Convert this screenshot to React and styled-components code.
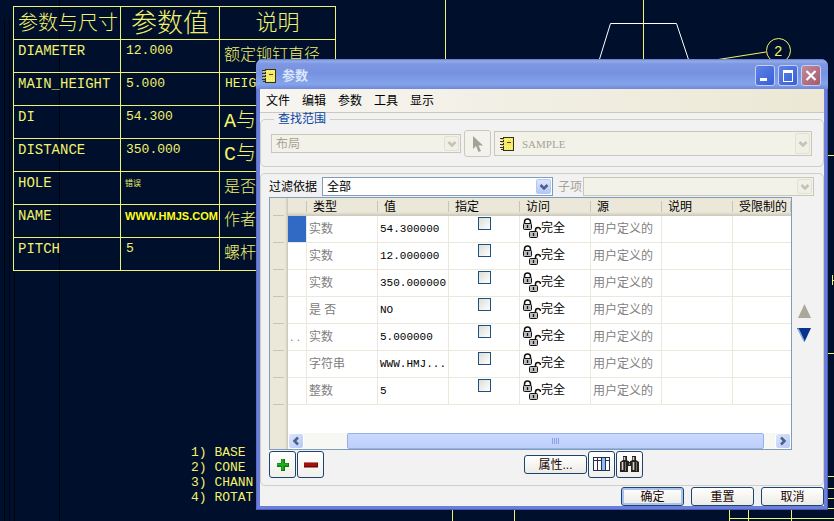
import { useState } from "react";
import styled, { createGlobalStyle, css } from "styled-components";

const GlobalStyle = createGlobalStyle`
  * {
    box-sizing: border-box;
  }

  body {
    margin: 0;
    background: #000f2b;
    font-family: "Liberation Sans", "Noto Sans CJK SC", sans-serif;
    font-size: 12px;
    line-height: 16px;
  }

  button, select, input {
    font: inherit;
    margin: 0;
  }
`;

const drawingRows = [
  { name: "DIAMETER", value: "12.000", note: "额定铆钉直径" },
  { name: "MAIN_HEIGHT", value: "5.000", note: "HEIG", latin: true },
  { name: "DI", value: "54.300", note: "A与", large: true },
  { name: "DISTANCE", value: "350.000", note: "C与", large: true },
  { name: "HOLE", value: "错误", kind: "tiny", note: "是否" },
  { name: "NAME", value: "WWW.HMJS.COM", kind: "bold", note: "作者" },
  { name: "PITCH", value: "5", note: "螺杆" },
];

const notes = ["1) BASE", "2) CONE", "3) CHANN", "4) ROTAT"];

const menus = ["文件", "编辑", "参数", "工具", "显示"];

const columns = ["类型", "值", "指定", "访问", "源", "说明", "受限制的"];

const params = [
  { type: "实数", value: "54.300000", selected: true },
  { type: "实数", value: "12.000000" },
  { type: "实数", value: "350.000000" },
  { type: "是 否", value: "NO" },
  { type: "实数", value: "5.000000", clipped: ". ." },
  { type: "字符串", value: "WWW.HMJ..." },
  { type: "整数", value: "5" },
];

const NotebookIcon = () => (
  <svg width="15" height="16" viewBox="0 0 15 16" shapeRendering="crispEdges">
    <rect x="3.500" y="1.500" width="10" height="13" fill="#f5ea62" stroke="#33311a" />
    <path d="M13.500 2v13M4 14.500h10" stroke="#33311a" />
    <path d="M5 3.500h8M5 10.500h8M5 12.500h8" stroke="#fff9a8" strokeDasharray="1 1" />
    <path d="M7 6.500h4" stroke="#4a4630" />
    <path d="M0 2.500h4M0 5.500h4M0 8.500h4M0 11.500h4M1 13.500h3" stroke="#33311a" />
    <path d="M1 3.500h3M1 6.500h3M1 9.500h3" stroke="#d9cf6a" />
  </svg>
);

const LocksIcon = () => (
  <svg width="19" height="21" viewBox="0 0 19 21" fill="none">
    <path d="M2.500 6V4q0-3 3-3t3 3v2" stroke="#111" strokeWidth="1.500" />
    <rect x="1.500" y="5.500" width="8" height="6" rx="1" fill="#bdbdbd" stroke="#111" />
    <path d="M5.500 7v3" stroke="#111" strokeWidth="1.300" />
    <path d="M13.500 14v-2q0-2.500 2.500-2.500t2.500 2.500" stroke="#111" strokeWidth="1.500" />
    <rect x="7.500" y="13.500" width="8" height="6" rx="1" fill="#bdbdbd" stroke="#111" />
    <path d="M11.500 15v3" stroke="#111" strokeWidth="1.300" />
  </svg>
);

const Chevron = ({ dir = "down", color = "#4d6185" }) => (
  <svg width="10" height="10" viewBox="0 0 10 10" fill="none" stroke={color} strokeWidth="2.500">
    {dir === "down" && <path d="M1.500 3 5 6.500 8.500 3" />}
    {dir === "left" && <path d="M7 1.500 3.500 5 7 8.500" />}
    {dir === "right" && <path d="M3 1.500 6.500 5 3 8.500" />}
  </svg>
);

const Drawing = () => (
  <Sketch aria-hidden="true">
    <g stroke="#000" strokeOpacity="0.7">
      <path d="M4.500 20V521M9.500 20V521M14.500 272V521M59.500 0V521" />
    </g>
    <g stroke="#f2f26b" fill="none" shapeRendering="crispEdges">
      <path d="M445.500 0V80M643.500 0V80M452.500 500V521M514.500 500V521" />
      <path d="M820 155.500H834M820 353.500H834M820 476.500H834M820 488.500H834M820 498.500H834M820 508.500H834" />
      <path d="M729.500 500V521M748.500 500V521M791.500 500V521M729 518.500H834M832.500 275V285M832 280.500H834" />
    </g>
    <path d="M598 64 610.500 23.500H676.500L690 64" stroke="#fff" fill="none" />
    <path d="M715 60 766 52" stroke="#f2f26b" />
    <circle cx="778.500" cy="50.500" r="12" stroke="#f2f26b" fill="none" />
    <text x="774" y="56" fill="#f2f26b" fontFamily="Liberation Mono" fontSize="14">2</text>
  </Sketch>
);

const Combo = ({ label, value, disabled, icon, serif, tall, id }) => (
  <ComboFrame $disabled={disabled} $tall={tall}>
    <ComboSelect id={id} aria-label={label} disabled={disabled} $icon={!!icon} $serif={serif}>
      <option>{value}</option>
    </ComboSelect>
    {icon && <ComboIcon>{icon}</ComboIcon>}
    <ComboArrow $disabled={disabled}>
      <Chevron color={disabled ? "#c3c2b4" : "#4d6185"} />
    </ComboArrow>
  </ComboFrame>
);

const App = () => {
  const [checked, setChecked] = useState({});

  const toggle = (i) => setChecked({ ...checked, [i]: !checked[i] });

  return (
    <Desktop>
      <GlobalStyle />
      <Drawing />
      <DrawingTable>
        <colgroup>
          <col width="107" />
          <col width="99" />
          <col width="116" />
        </colgroup>
        <thead>
          <tr>
            <DrawingHead $size={20}>参数与尺寸</DrawingHead>
            <DrawingHead $size={26} $center>参数值</DrawingHead>
            <DrawingHead $size={22} $center>说明</DrawingHead>
          </tr>
        </thead>
        <tbody>
          {drawingRows.map((row) => (
            <tr key={row.name}>
              <DrawingCell>{row.name}</DrawingCell>
              <DrawingCell $kind={row.kind || "value"}>{row.value}</DrawingCell>
              <DrawingCell $kind={row.latin ? "value" : row.large ? "large" : "note"}>{row.note}</DrawingCell>
            </tr>
          ))}
        </tbody>
      </DrawingTable>
      <Notes>
        {notes.map((n) => <li key={n}>{n}</li>)}
      </Notes>

      <Dialog role="dialog" aria-labelledby="dialog-title">
        <TitleBar>
          <NotebookIcon />
          <Title id="dialog-title">参数</Title>
          <WindowButton aria-label="最小化">
            <svg width="18" height="19" viewBox="0 0 18 19"><path d="M4 13.500h7" stroke="#fff" strokeWidth="3" /></svg>
          </WindowButton>
          <WindowButton aria-label="最大化">
            <svg width="18" height="19" viewBox="0 0 18 19" shapeRendering="crispEdges"><path d="M4.500 5v10h9V5M4 5h10" fill="none" stroke="#fff" /><path d="M4 5.500h10" stroke="#fff" strokeWidth="3" /></svg>
          </WindowButton>
          <WindowButton aria-label="关闭" $close>
            <svg width="18" height="19" viewBox="0 0 18 19"><path d="m4.500 5 9 9m0-9-9 9" stroke="#fff" strokeWidth="2.200" /></svg>
          </WindowButton>
        </TitleBar>

        <Content>
          <MenuBar>
            {menus.map((m) => <MenuButton key={m}>{m}</MenuButton>)}
          </MenuBar>

          <Scope>
            <legend>查找范围</legend>
            <ScopeRow>
              <ScopeKind>
                <Combo label="范围类型" value="布局" disabled />
              </ScopeKind>
              <ToolButton aria-label="选择" disabled>
                <svg width="12" height="18" viewBox="0 0 12 18"><path d="M1 1v13l3-3 2.500 6 2.500-1-2.500-5.500H11z" fill="#a5a398" /></svg>
              </ToolButton>
              <Combo label="布局名称" value="SAMPLE" disabled serif tall icon={<NotebookIcon />} />
            </ScopeRow>
          </Scope>

          <Panel>
            <FilterRow>
              <FilterLabel htmlFor="filter">过滤依据</FilterLabel>
              <Combo id="filter" value="全部" />
              <FilterLabel htmlFor="sub" $disabled>子项</FilterLabel>
              <Combo id="sub" value="" disabled />
            </FilterRow>

            <GridArea>
              <GridFrame>
                <ParamTable>
                  <colgroup>
                    <col width="18" />
                    <col width="19" />
                    {columns.slice(0, 6).map((c) => <col key={c} width="71" />)}
                    <col />
                  </colgroup>
                  <thead>
                    <tr>
                      <Stub as="td" />
                      <HeadCell as="td" />
                      {columns.map((c) => <HeadCell key={c} scope="col">{c}</HeadCell>)}
                    </tr>
                  </thead>
                  <tbody>
                    {params.map((p, i) => (
                      <tr key={i}>
                        <Stub />
                        <NameCell $selected={p.selected}>{p.clipped}</NameCell>
                        <Cell $muted>{p.type}</Cell>
                        <Cell $mono>{p.value}</Cell>
                        <CheckCell>
                          <CheckBox
                            type="checkbox"
                            aria-label={`指定 ${i + 1}`}
                            checked={!!checked[i]}
                            onChange={() => toggle(i)}
                          />
                        </CheckCell>
                        <Cell>
                          <Access><LocksIcon />完全</Access>
                        </Cell>
                        <Cell $muted>用户定义的</Cell>
                        <Cell />
                        <Cell />
                      </tr>
                    ))}
                  </tbody>
                </ParamTable>
                <ScrollBar>
                  <ScrollButton aria-label="向左滚动"><Chevron dir="left" /></ScrollButton>
                  <Track>
                    <Thumb>
                      <svg width="8" height="6" shapeRendering="crispEdges"><path d="M.5 0v6M2.500 0v6M4.500 0v6M6.500 0v6" stroke="#8ba3e0" /></svg>
                    </Thumb>
                  </Track>
                  <ScrollButton aria-label="向右滚动"><Chevron dir="right" /></ScrollButton>
                </ScrollBar>
              </GridFrame>
              <MoveButtons>
                <MoveButton aria-label="上移" disabled>
                  <svg width="15" height="15" viewBox="0 0 15 15"><path d="M7.500 0 14 14H1z" fill="#aca899" /></svg>
                </MoveButton>
                <MoveButton aria-label="下移">
                  <svg width="15" height="15" viewBox="0 0 15 15"><path d="M0 0h14L7.500 14z" fill="#0a318f" /><path d="M1 .5 7 13" stroke="#86b2de" strokeWidth="1.500" /></svg>
                </MoveButton>
              </MoveButtons>
            </GridArea>

            <ToolBar>
              <ToolButton aria-label="添加">
                <svg width="14" height="14" viewBox="0 0 14 14"><path d="M7 1v12M1 7h12" stroke="#0d7a10" strokeWidth="4" /><path d="M6.500 1v11M1 6.500h11" stroke="#22b022" strokeWidth="2" /></svg>
              </ToolButton>
              <ToolButton aria-label="删除">
                <svg width="14" height="14" viewBox="0 0 14 14"><path d="M0 7h14" stroke="#6f0505" strokeWidth="5" /><path d="M0 6.500h13" stroke="#a80c0c" strokeWidth="3" /></svg>
              </ToolButton>
              <ToolGroup>
                <PushButton>属性...</PushButton>
                <ToolButton aria-label="列">
                  <svg width="17" height="15" viewBox="0 0 17 15" shapeRendering="crispEdges">
                    <path d="M.5.5h16v13H.5z" fill="#fff" stroke="#26334f" />
                    <path d="M8 1h5v12H8z" fill="#8dbbf5" />
                    <path d="M1 3.500h7M13 3.500h3M4.500 1v12M8.500 1v12M12.500 1v12" stroke="#26334f" />
                  </svg>
                </ToolButton>
                <ToolButton aria-label="查找">
                  <svg width="19" height="17" viewBox="0 0 19 17">
                    <path d="M3 0h4v4l1 1v11H0V6l3-2zM12 0h4v4l3 2v10h-8V5l1-1z" fill="#26231f" />
                    <path d="M7 5h5v5H7z" fill="#26231f" />
                    <path d="M4.500 1v3M2.500 6v8M13.500 1v3M13.500 6v8" stroke="#d5d2ca" strokeWidth="1.600" />
                    <path d="M5.500 6v9M16.500 6v9" stroke="#77736b" />
                    <path d="M9 5.500h1M9 8h1" stroke="#e8e6df" />
                  </svg>
                </ToolButton>
              </ToolGroup>
            </ToolBar>
          </Panel>

          <Footer>
            <PushButton $primary>确定</PushButton>
            <PushButton>重置</PushButton>
            <PushButton>取消</PushButton>
          </Footer>
        </Content>
      </Dialog>
    </Desktop>
  );
};

export default App;

const Desktop = styled.div`
  position: relative;
  min-height: 100vh;
  overflow: hidden;
  padding: 6px 0 0 13px;
  color: #f2f26b;
`;

const Sketch = styled.svg`
  position: absolute;
  inset: 0;
  width: 100%;
  height: 100%;
`;

const DrawingTable = styled.table`
  position: relative;
  width: 323px;
  table-layout: fixed;
  border-spacing: 0;
  border: solid #f2f26b;
  border-width: 1px 0 0 1px;
`;

const drawingBox = css`
  height: 33px;
  padding: 0 0 0 4px;
  border: solid #f2f26b;
  border-width: 0 1px 1px 0;
  text-align: left;
  white-space: nowrap;
`;

const DrawingHead = styled.th`
  ${drawingBox}
  font-size: ${(p) => p.$size}px;
  font-weight: 300;
  line-height: 28px;
  ${(p) => p.$center && "padding: 0; text-align: center;"}
`;

const kinds = {
  value: "font-size: 13px; padding-left: 5px;",
  tiny: `font-size: 8px; font-family: "Noto Sans CJK SC", sans-serif;`,
  bold: `
    color: #ffff1a;
    font-family: "Liberation Sans", sans-serif;
    font-size: 11px;
    font-weight: 700;
  `,
  note: "font-size: 16px; line-height: 24px; padding-top: 4px; font-weight: 300;",
  large: "font-size: 20px; line-height: 24px; padding-top: 4px; font-weight: 300;",
};

const DrawingCell = styled.td`
  ${drawingBox}
  padding-top: 2px;
  vertical-align: top;
  font-family: "Liberation Mono", "Noto Sans CJK SC", monospace;
  font-size: 14px;
  line-height: 18px;
  ${(p) => kinds[p.$kind]}
`;

const Notes = styled.ul`
  position: relative;
  margin: 174px 0 0 178px;
  padding: 0;
  list-style: none;
  font-family: "Liberation Mono", monospace;
  font-size: 13px;
  line-height: 15px;
`;

const Dialog = styled.section`
  position: absolute;
  top: 59px;
  left: 256px;
  right: 6px;
  padding: 0 4px 4px;
  border-radius: 7px 7px 0 0;
  background: #6b7fd9;
  box-shadow: inset 1px 0 #5a6cc8, inset -1px -1px #4a5cba;
  color: #000;
`;

const TitleBar = styled.header`
  display: flex;
  align-items: center;
  gap: 3px;
  height: 30px;
  margin: 0 -4px;
  padding: 3px 7px 0 6px;
  border-radius: 7px 7px 0 0;
  background: linear-gradient(#6379cf 0, #93adea 2px, #7d97e2 5px, #7792e0 14px, #83a4eb 25px, #7288d8 30px);
`;

const Title = styled.h1`
  flex: 1;
  margin: 0;
  padding-left: 2px;
  color: #dce6fb;
  font-size: 13px;
  line-height: 16px;
`;

const WindowButton = styled.button`
  display: flex;
  width: 20px;
  height: 21px;
  padding: 0;
  border: 1px solid #c3d0f5;
  border-radius: 3px;
  background: ${(p) => (p.$close
    ? "linear-gradient(135deg, #c18a9c, #a6596b)"
    : "linear-gradient(135deg, #5f82e4, #3560d8)")};
`;

const Content = styled.div`
  background: #f2f2f2;
`;

const MenuBar = styled.nav`
  display: flex;
  gap: 12px;
  height: 24px;
  padding: 2px 6px;
  border-bottom: 1px solid #cbc9bc;
  background: linear-gradient(to right, #f6f5f1, #ece8d5);
`;

const MenuButton = styled.button`
  padding: 0;
  border: 0;
  background: none;
`;

const Scope = styled.fieldset`
  min-width: 0;
  margin: 0;
  padding: 4px 11px 9px 10px;
  border: 1px solid #d0cfc3;
  border-radius: 5px;

  legend {
    margin-left: 3px;
    padding: 0 4px;
    color: #0a46a0;
    line-height: 13px;
  }
`;

const ScopeRow = styled.div`
  display: flex;
  align-items: center;
  gap: 3px;
`;

const ScopeKind = styled.div`
  display: flex;
  width: 190px;
`;

const ComboFrame = styled.div`
  display: grid;
  flex: 1;
  align-items: center;
  height: ${(p) => (p.$tall ? 25 : 19)}px;
  border: 1px solid ${(p) => (p.$disabled ? "#c9c7ba" : "#7f9db9")};
  background: ${(p) => (p.$disabled ? "#f3f2e8" : "#fff")};

  > * {
    grid-area: 1 / 1;
  }
`;

const ComboSelect = styled.select`
  width: 100%;
  height: 100%;
  padding: 0 18px 0 ${(p) => (p.$icon ? 27 : 4)}px;
  border: 0;
  background: none;
  appearance: none;
  color: #000;
  line-height: 16px;
  ${(p) => p.$serif && `
    font-family: "Liberation Serif", serif;
    font-size: 11px;
  `}

  &:disabled {
    color: #a5a398;
    opacity: 1;
  }
`;

const ComboIcon = styled.span`
  display: flex;
  width: 15px;
  margin-left: 5px;
  pointer-events: none;
`;

const ComboArrow = styled.span`
  display: flex;
  align-items: center;
  justify-content: center;
  justify-self: end;
  align-self: stretch;
  width: 15px;
  margin: 1px;
  border: 1px solid ${(p) => (p.$disabled ? "#e3e1d4" : "#b5c8f5")};
  border-radius: 2px;
  background: ${(p) => (p.$disabled ? "#f1f0e6" : "linear-gradient(#dce7fe, #b3c8f6)")};
  pointer-events: none;
`;

const ToolButton = styled.button`
  display: flex;
  align-items: center;
  justify-content: center;
  width: 27px;
  height: 27px;
  padding: 0;
  border: 1px solid #1d4470;
  border-radius: 3px;
  background: linear-gradient(#fff, #f0efe9);

  &:disabled {
    border-color: #cbc9bc;
    background: #f3f2ec;
  }
`;

const Panel = styled.section`
  margin-top: 6px;
  padding: 3px 9px 7px 8px;
  border: 1px solid #d0cfc3;
  border-radius: 5px;
`;

const FilterRow = styled.div`
  display: flex;
  align-items: center;
  margin-bottom: 1px;
`;

const FilterLabel = styled.label`
  padding-right: ${(p) => (p.$disabled ? 1 : 5)}px;
  padding-left: ${(p) => (p.$disabled ? 5 : 0)}px;
  color: ${(p) => (p.$disabled ? "#a5a398" : "#000")};
`;

const GridArea = styled.div`
  display: flex;
`;

const GridFrame = styled.div`
  flex: 1;
  min-width: 0;
  border: 1px solid #7f9db9;
  background: linear-gradient(to right, #ebe8d9 15px, #c9c5b4 18px, #fff 18px);
`;

const ParamTable = styled.table`
  width: 100%;
  margin-bottom: 28px;
  table-layout: fixed;
  border-spacing: 0;
`;

const Stub = styled.th`
  padding: 0;
  background: linear-gradient(#c9c5b4, #c9c5b4) 3px 100% / 11px 1px no-repeat;
`;

const HeadCell = styled.th`
  height: 18px;
  padding: 0 0 0 6px;
  background:
    linear-gradient(#c9c5b4, #c9c5b4) 100% 3px / 1px 11px no-repeat,
    linear-gradient(#ebe8d9 14px, #cbc7b8 18px);
  font-weight: 400;
  line-height: 16px;
  text-align: left;
  white-space: nowrap;
`;

const Cell = styled.td`
  height: 27px;
  padding: 0 0 0 2px;
  border: solid #ece9dc;
  border-width: 0 1px 1px 0;
  color: ${(p) => (p.$muted ? "#808080" : "#000")};
  white-space: nowrap;
  ${(p) => p.$mono && `
    font-family: "Liberation Mono", monospace;
    font-size: 11px;
  `}

  &:last-child {
    border-right: 0;
  }
`;

const NameCell = styled(Cell)`
  color: #808080;
  background: ${(p) => (p.$selected ? "#316ac5" : "none")};
`;

const CheckCell = styled(Cell)`
  padding: 1px 0 0;
  text-align: center;
  vertical-align: top;
  line-height: 0;
`;

const CheckBox = styled.input`
  width: 13px;
  height: 13px;
  border: 1px solid #1c5180;
  background: linear-gradient(135deg, #dcdcd7, #fff);
  appearance: none;

  &:checked {
    background: #21a121;
  }
`;

const Access = styled.span`
  display: flex;
  align-items: center;
  padding-bottom: 2px;
`;

const ScrollBar = styled.div`
  display: flex;
  height: 16px;
  margin-left: 18px;
  background: #f7f7f3;
`;

const ScrollButton = styled.button`
  display: flex;
  align-items: center;
  justify-content: center;
  width: 16px;
  padding: 0;
  border: 1px solid #fff;
  border-radius: 3px;
  background: linear-gradient(135deg, #dbe6fe, #b6caf8);
`;

const Track = styled.div`
  display: flex;
  flex: 1;
  padding: 0 11px 0 43px;
`;

const Thumb = styled.div`
  display: flex;
  flex: 1;
  align-items: center;
  justify-content: center;
  border: 1px solid #98b0e8;
  border-radius: 2px;
  background: linear-gradient(#cbd9fe, #bccffb);
`;

const MoveButtons = styled.div`
  display: flex;
  flex-direction: column;
  justify-content: center;
  gap: 9px;
  width: 22px;
  padding-left: 5px;
`;

const MoveButton = styled.button`
  display: flex;
  padding: 0;
  border: 0;
  background: none;
`;

const ToolBar = styled.div`
  display: flex;
  gap: 1px;
  padding-top: 1px;
`;

const ToolGroup = styled.div`
  display: flex;
  align-items: center;
  gap: 1px;
  margin: 0 171px 0 auto;
`;

const PushButton = styled.button`
  width: 63px;
  height: 19px;
  padding: 0;
  border: 1px solid #1d4470;
  border-radius: 3px;
  background: linear-gradient(#fff, #ecebe4);
  box-shadow: ${(p) => (p.$primary ? "inset 0 0 0 2px #a9c2f0" : "none")};
  color: #1a0505;
  line-height: 16px;
`;

const Footer = styled.footer`
  display: flex;
  justify-content: flex-end;
  gap: 7px;
  padding-top: 1px;
`;
